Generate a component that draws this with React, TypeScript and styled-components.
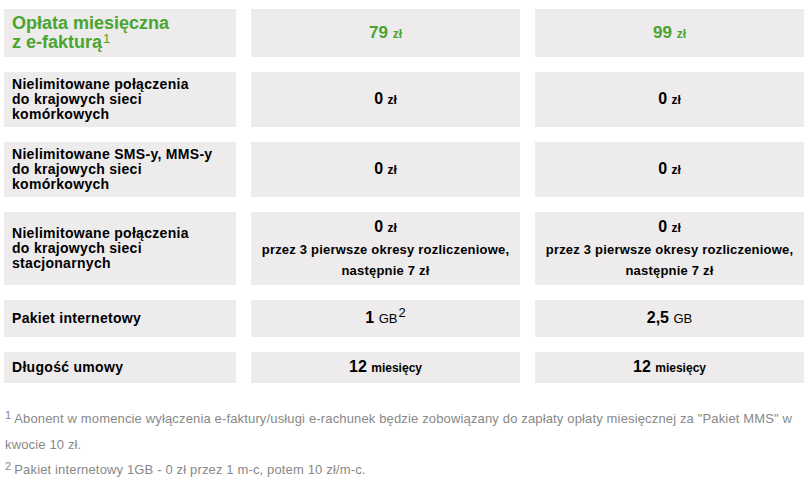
import styled, { createGlobalStyle } from 'styled-components';

const GlobalStyle = createGlobalStyle`
  html, body {
    margin: 0;
    padding: 0;
    background: #ffffff;
  }
  body {
    font-family: "Liberation Sans", Arial, sans-serif;
    color: #000000;
  }
`;

const Page = styled.div`
  width: 800px;
  padding: 9px 4px 0 4px;
`;

// Comparison table
const Table = styled.div`
  display: grid;
  grid-template-columns: 232px 269px 269px;
  grid-template-rows: 48px 55px 55px 73px 37px 31px;
  column-gap: 15px;
  row-gap: 15px;
`;

const Cell = styled.div<{ $center?: boolean }>`
  background-color: #edebeb;
  display: flex;
  flex-direction: column;
  justify-content: center;
  align-items: ${(p) => (p.$center ? 'center' : 'flex-start')};
  text-align: ${(p) => (p.$center ? 'center' : 'left')};
  padding: 0 8px;
  box-sizing: border-box;
`;

const HeadLabel = styled.div`
  color: #47a530;
  font-size: 18px;
  font-weight: bold;
  line-height: 19px;
`;

const Label = styled.div`
  font-size: 14px;
  font-weight: bold;
  line-height: 15px;
  letter-spacing: 0.3px;
`;

const Sup = styled.sup<{ $size?: number; $lift?: number }>`
  font-size: ${(p) => p.$size || 12}px;
  font-weight: normal;
  line-height: 1;
  vertical-align: top;
  position: relative;
  top: ${(p) => -(p.$lift ?? 3)}px;
  margin-left: 1px;
`;

const Value = styled.div<{ $green?: boolean }>`
  color: ${(p) => (p.$green ? '#47a530' : '#000000')};
  font-size: ${(p) => (p.$green ? 17 : 16)}px;
  font-weight: bold;
  line-height: 22px;
`;

const Unit = styled.span<{ $light?: boolean }>`
  font-size: ${(p) => (p.$light ? 13 : 12)}px;
  font-weight: ${(p) => (p.$light ? 'normal' : 'bold')};
`;

const Note = styled.div`
  font-size: 13px;
  font-weight: bold;
  line-height: 21px;
  letter-spacing: 0.2px;
`;

// Footnotes
const Footnotes = styled.div`
  margin-top: 23px;
  color: #888888;
  font-size: 13px;
  letter-spacing: 0.15px;
  line-height: 26px;
`;

const Footnote = styled.p`
  margin: 0;
  padding-left: 1px;

  & + & {
    margin-top: -1px;
  }
`;

const NoteNum = styled.sup`
  font-size: 11px;
  line-height: 1;
  vertical-align: top;
  position: relative;
  top: 4px;
  margin-right: 3px;
`;

type Row = {
  label: React.ReactNode;
  values: React.ReactNode[];
};

const promo = (
  <>
    <Value>
      0 <Unit>zł</Unit>
    </Value>
    <Note>przez 3 pierwsze okresy rozliczeniowe,</Note>
    <Note>następnie 7 zł</Note>
  </>
);

const zero = (
  <Value>
    0 <Unit>zł</Unit>
  </Value>
);

const rows: Row[] = [
  {
    label: (
      <Label>
        Nielimitowane połączenia
        <br />
        do krajowych sieci
        <br />
        komórkowych
      </Label>
    ),
    values: [zero, zero],
  },
  {
    label: (
      <Label>
        Nielimitowane SMS-y, MMS-y
        <br />
        do krajowych sieci
        <br />
        komórkowych
      </Label>
    ),
    values: [zero, zero],
  },
  {
    label: (
      <Label>
        Nielimitowane połączenia
        <br />
        do krajowych sieci
        <br />
        stacjonarnych
      </Label>
    ),
    values: [promo, promo],
  },
  {
    label: <Label>Pakiet internetowy</Label>,
    values: [
      <Value>
        1 <Unit $light>GB</Unit>
        <Sup $size={13} $lift={1}>2</Sup>
      </Value>,
      <Value>
        2,5 <Unit $light>GB</Unit>
      </Value>,
    ],
  },
  {
    label: <Label>Długość umowy</Label>,
    values: [
      <Value>
        12 <Unit>miesięcy</Unit>
      </Value>,
      <Value>
        12 <Unit>miesięcy</Unit>
      </Value>,
    ],
  },
];

export default function App() {
  return (
    <Page>
      <GlobalStyle />
      <Table>
        <Cell>
          <HeadLabel>
            Opłata miesięczna
            <br />
            z e-fakturą<Sup $size={13} $lift={1}>1</Sup>
          </HeadLabel>
        </Cell>
        <Cell $center>
          <Value $green>
            79 <Unit>zł</Unit>
          </Value>
        </Cell>
        <Cell $center>
          <Value $green>
            99 <Unit>zł</Unit>
          </Value>
        </Cell>
        {rows.map((row, i) => (
          <>
            <Cell key={`l${i}`}>{row.label}</Cell>
            {row.values.map((v, j) => (
              <Cell key={`v${i}-${j}`} $center>
                {v}
              </Cell>
            ))}
          </>
        ))}
      </Table>
      <Footnotes>
        <Footnote>
          <NoteNum>1</NoteNum>Abonent w momencie wyłączenia e-faktury/usługi
          e-rachunek będzie zobowiązany do zapłaty opłaty miesięcznej za "Pakiet
          MMS" w kwocie 10 zł.
        </Footnote>
        <Footnote>
          <NoteNum>2</NoteNum>Pakiet internetowy 1GB - 0 zł przez 1 m-c, potem
          10 zł/m-c.
        </Footnote>
      </Footnotes>
    </Page>
  );
}
